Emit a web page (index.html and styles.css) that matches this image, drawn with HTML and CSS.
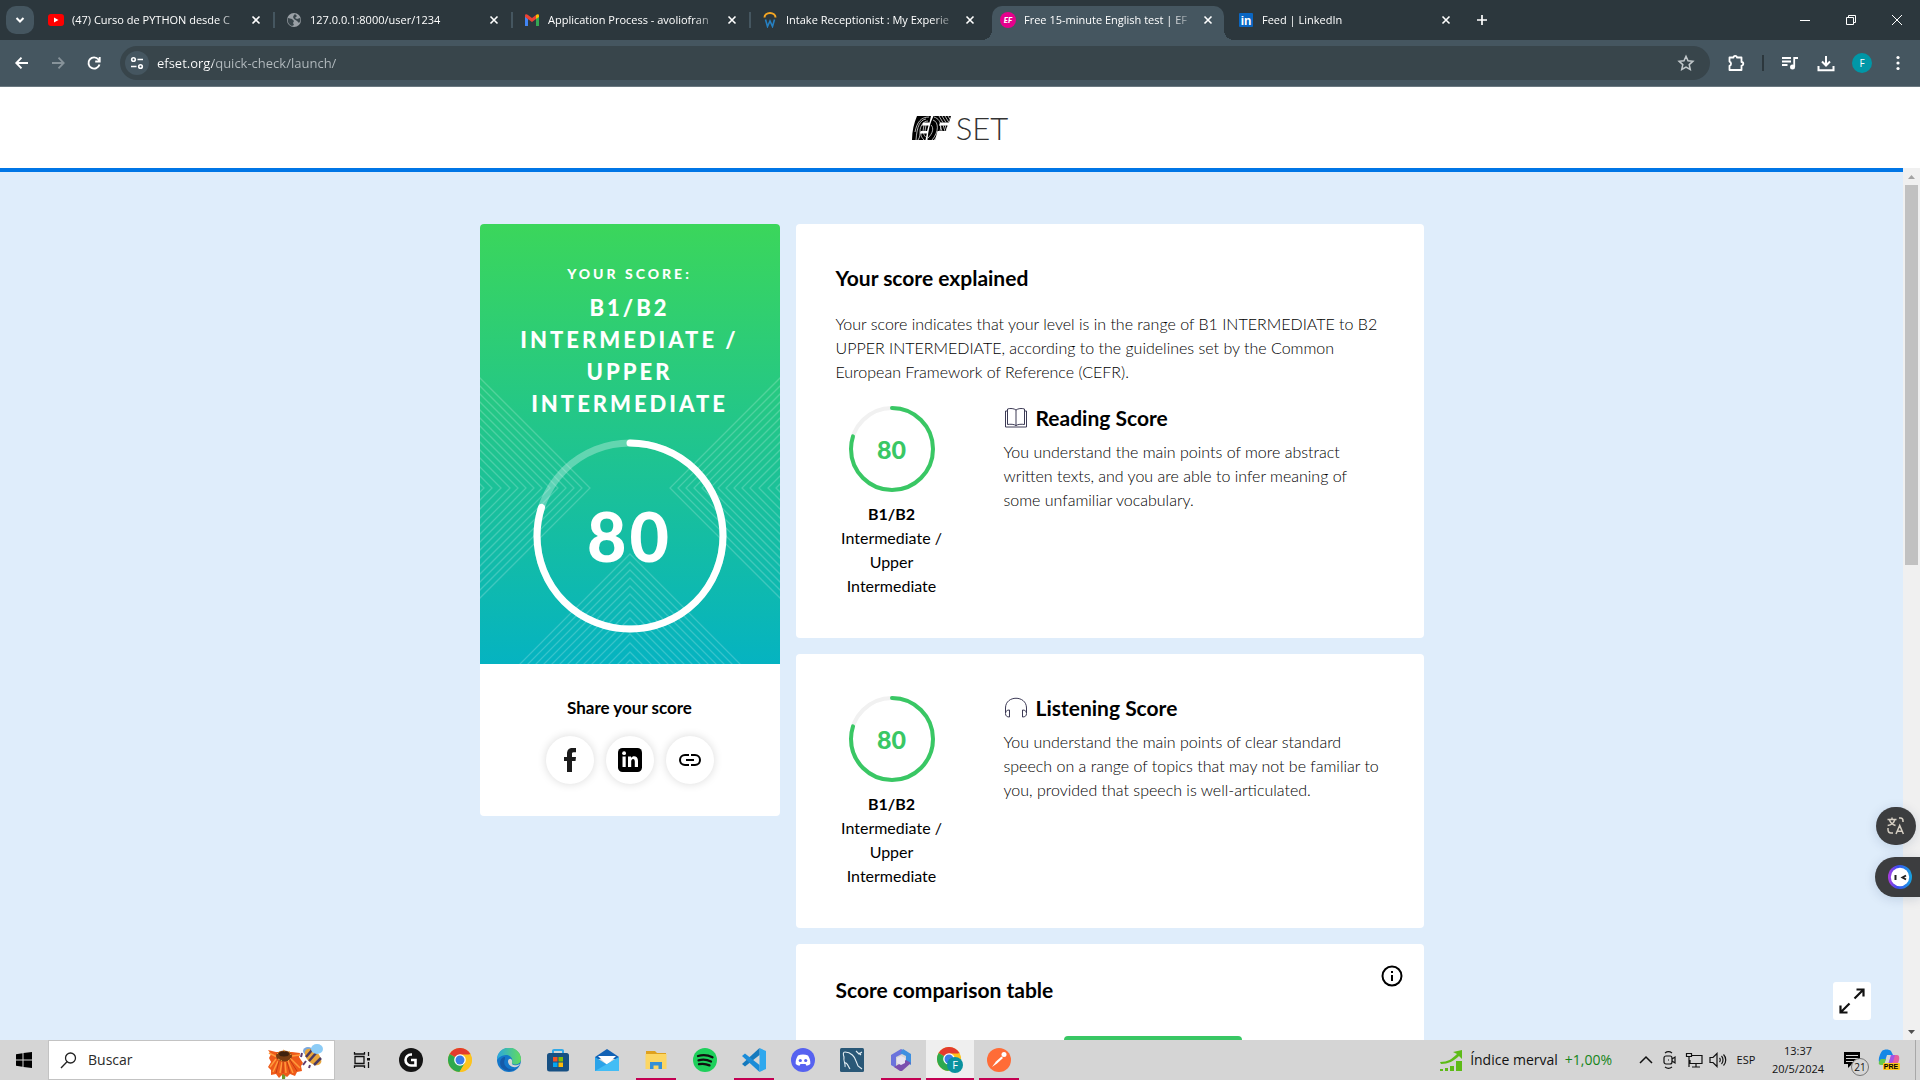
FILE: index.html
```html
<!DOCTYPE html>
<html lang="en">
<head>
<meta charset="utf-8">
<title>Free 15-minute English test | EF SET</title>
<link rel="stylesheet" href="styles.css">
</head>
<body>
<svg class="defs" aria-hidden="true">
  <defs>
    <symbol id="x" viewBox="0 0 16 16"><path d="M4.500 4.500l7 7M11.500 4.500l-7 7" stroke="currentColor" stroke-width="1.600" fill="none"/></symbol>
    <symbol id="chrome" viewBox="0 0 24 24">
      <circle cx="12" cy="12" r="12" fill="#fcc31e"/>
      <path d="M12 12L1.600 6A12 12 0 0 1 22.400 6z" fill="#e33b2e"/><path d="M6 6h16.400H12z" fill="#e33b2e"/>
      <path d="M12 12L1.600 6A12 12 0 0 0 11.500 24l5.700-9z" fill="#2da94f"/>
      <path d="M12 6.500h10.400A12 12 0 0 1 11.500 24l5.300-9z" fill="#fcc31e"/>
      <circle cx="12" cy="12" r="5.800" fill="#fff"/><circle cx="12" cy="12" r="4.500" fill="#3a7de8"/>
    </symbol>
    <symbol id="diamonds" viewBox="-111 -111 222 222">
      <path fill="none" stroke="#fff" stroke-opacity=".2" stroke-width="1.300" d="M0-110L110 0 0 110-110 0zM0-102L102 0 0 102-102 0zM0-94L94 0 0 94-94 0zM0-86L86 0 0 86-86 0zM0-78L78 0 0 78-78 0zM0-70L70 0 0 70-70 0zM0-62L62 0 0 62-62 0zM0-54L54 0 0 54-54 0zM0-46L46 0 0 46-46 0zM0-38L38 0 0 38-38 0zM0-30L30 0 0 30-30 0zM0-21L21 0 0 21-21 0zM0-12L12 0 0 12-12 0zM0-4L4 0 0 4-4 0z"/>
    </symbol>
  </defs>
</svg>

<header class="tabstrip">
  <div class="tab-search"><button aria-label="Search tabs"><svg width="16" height="16" viewBox="0 0 16 16"><path d="M4.500 6l3.500 3.500L11.500 6" stroke="currentColor" stroke-width="2" fill="none"/></svg></button></div>
  <nav class="tabs">
    <div class="tab">
      <svg width="16" height="16" viewBox="0 0 16 16"><rect y="2" width="16" height="12" rx="3" fill="#f00"/><path d="M6 5.500v5l4.500-2.500z" fill="#fff"/></svg>
      <a href="#">(47) Curso de PYTHON desde C</a><button aria-label="Close tab"><svg width="16" height="16"><use href="#x"/></svg></button>
    </div>
    <div class="tab">
      <svg width="16" height="16" viewBox="0 0 16 16"><circle cx="8" cy="8" r="7" fill="#9aa0a6"/><path d="M2 6l4 1 2 2-1 2 1 2-2 1C3 13 1 10 2 6zM9 2l2 2-2 2 2 1 3-1c1 2 0 4-1 5l-2-2-3-2-1-2 1-2z" fill="#39454b"/></svg>
      <a href="#">127.0.0.1:8000/user/1234</a><button aria-label="Close tab"><svg width="16" height="16"><use href="#x"/></svg></button>
    </div>
    <div class="tab">
      <svg width="16" height="16" viewBox="0 0 16 16"><path d="M1 4v10h3V7z" fill="#4285f4"/><path d="M15 4v10h-3V7z" fill="#34a853"/><path d="M1 3.500C1 2 3 2 4 3l4 3 4-3v4L8 10 1 5z" fill="#ea4335"/><path d="M12 3c1-1 3-1 3 .5V5l-3 2z" fill="#fbbc04"/></svg>
      <a href="#">Application Process - avoliofran</a><button aria-label="Close tab"><svg width="16" height="16"><use href="#x"/></svg></button>
    </div>
    <div class="tab">
      <svg width="16" height="16" viewBox="0 0 16 16"><path d="M2.500 5.500a5.500 4.500 0 0 1 11 0" fill="none" stroke="#f5a623" stroke-width="2"/><path d="M3.500 7.500l2 7L8 9l2.500 5.500 2-7" fill="none" stroke="#2680c2" stroke-width="1.600"/></svg>
      <a href="#">Intake Receptionist : My Experie</a><button aria-label="Close tab"><svg width="16" height="16"><use href="#x"/></svg></button>
    </div>
    <div class="tab active">
      <svg width="16" height="16" viewBox="0 0 16 16"><circle cx="8" cy="8" r="8" fill="#e6008c"/><text x="8" y="11" text-anchor="middle" class="ef-mini">EF</text></svg>
      <a href="#">Free 15-minute English test | EF</a><button aria-label="Close tab"><svg width="16" height="16"><use href="#x"/></svg></button>
    </div>
    <div class="tab">
      <svg width="16" height="16" viewBox="0 0 16 16"><rect x="1" y="1" width="14" height="14" rx="1" fill="#0a66c2"/><text x="8" y="12.500" text-anchor="middle" class="in-mini">in</text></svg>
      <a href="#">Feed | LinkedIn</a><button aria-label="Close tab"><svg width="16" height="16"><use href="#x"/></svg></button>
    </div>
  </nav>
  <button class="new-tab" aria-label="New tab"><svg width="16" height="16" viewBox="0 0 16 16"><path d="M8 3v10M3 8h10" stroke="currentColor" stroke-width="1.700"/></svg></button>
  <div class="window-buttons">
    <button aria-label="Minimize"><svg width="12" height="12"><path d="M1 6.500h10" stroke="#fff"/></svg></button>
    <button aria-label="Restore"><svg width="12" height="12"><path d="M1.500 3.500h7v7h-7zM3.500 3.500v-2h7v7h-2" stroke="#fff" fill="none"/></svg></button>
    <button aria-label="Close"><svg width="12" height="12"><path d="M1 1l10 10M11 1L1 11" stroke="#fff"/></svg></button>
  </div>
</header>

<div class="toolbar">
  <button aria-label="Back"><svg width="20" height="20" viewBox="0 0 20 20"><path d="M16 10H5M9.500 4.700L4.300 10l5.200 5.300" stroke="currentColor" stroke-width="1.900" fill="none"/></svg></button>
  <button class="dim" aria-label="Forward"><svg width="20" height="20" viewBox="0 0 20 20"><path d="M4 10h11M10.500 4.700l5.200 5.300-5.200 5.300" stroke="currentColor" stroke-width="1.800" fill="none"/></svg></button>
  <button aria-label="Reload"><svg width="20" height="20" viewBox="0 0 20 20"><path d="M15.500 11.500A5.600 5.600 0 1 1 14.500 6.500L15.500 8M15.700 4v4.500h-4.500" stroke="currentColor" stroke-width="1.900" fill="none"/></svg></button>
  <form class="omnibox">
    <button type="button" class="site-info" aria-label="Site information"><svg width="16" height="16" viewBox="0 0 16 16" stroke="#fff" stroke-width="1.600" fill="none"><circle cx="4.500" cy="4.500" r="1.800"/><path d="M8.500 4.500H14M2 11.500h5.500"/><circle cx="11.500" cy="11.500" r="1.800"/></svg></button>
    <input type="text" aria-label="Address" value="efset.org/quick-check/launch/">
    <button type="button" class="star" aria-label="Bookmark"><svg width="18" height="18" viewBox="0 0 18 18"><path d="M9 2.300l2 4.500 4.900.5-3.700 3.300 1.100 4.900L9 13l-4.300 2.500 1.100-4.900-3.700-3.300 4.900-.5z" stroke="#c3c9cc" stroke-width="1.500" fill="none"/></svg></button>
  </form>
  <button aria-label="Extensions"><svg width="20" height="20" viewBox="0 0 20 20"><path d="M3.500 4.500h4a1.700 1.700 0 0 1 3.400 0h4.600V9a1.800 1.800 0 0 1 0 3.600v4.400h-12v-4.200a2.200 2.200 0 0 0 0-4.200z" stroke="currentColor" stroke-width="1.800" fill="none" stroke-linejoin="round"/></svg></button>
  <span class="divider"></span>
  <button aria-label="Media"><svg width="20" height="20" viewBox="0 0 20 20"><path d="M2 5h9M2 8.500h9M2 12h5.500M14.200 14V5H18" stroke="currentColor" stroke-width="1.800" fill="none"/><circle cx="12.500" cy="14" r="2.500" fill="currentColor"/></svg></button>
  <button aria-label="Downloads"><svg width="20" height="20" viewBox="0 0 20 20"><path d="M10 3v9.500M6 8.500l4 4 4-4M2.500 13v4.200h15V13" stroke="currentColor" stroke-width="2" fill="none"/></svg></button>
  <button aria-label="Profile"><span class="avatar">F</span></button>
  <button aria-label="Menu"><svg width="20" height="20" viewBox="0 0 20 20" fill="currentColor"><circle cx="10" cy="4.500" r="1.600"/><circle cx="10" cy="10" r="1.600"/><circle cx="10" cy="15.500" r="1.600"/></svg></button>
</div>

<div class="site-header">
  <a href="#" class="logo" aria-label="EF SET">
    <svg width="40" height="24" viewBox="0 0 40 24">
      <path d="M5 0h14l-1.500 6.500H11L10 9.500h6.500L15 15H8.700L7.800 17.500h7L13.500 24H0C0 15 2 7 5 0z"/>
      <path d="M21.500 0H39l-2 6.500h-9l-1 3h8.500L34 15h-8.500L23 24h-7.500C16 15 18 7 21.500 0z"/>
      <g fill="none" stroke="#fff" stroke-width=".7">
        <path d="M14 3C8 4 5 10 4 24M17 1C9 1 5 6 3 16M16 5c-5 0-8 6-8 10s0 6-2 9M10 16c-2 2-1 5 2 8M12 16c-1 1 0 4 3 6M12 9l-1 6M14 9l-1 6"/>
        <path d="M21 4c6 2 6 12-1 20M22 1c9 3 9 14 0 23M19 9c3 3 2 8-3 13M27 0l4 6.500M30 0l4 6.500M33 0l4 6.500M36 0l3 5M28 9l2 6M31 9l2 6M33 9l2 6"/>
      </g>
    </svg>
    <span>SET</span>
  </a>
</div>

<div class="viewport">
  <main class="page">
    <div class="columns">
      <aside class="card score-card">
        <section class="score-hero">
          <svg class="pat left" width="222" height="222"><use href="#diamonds"/></svg>
          <svg class="pat right" width="222" height="222"><use href="#diamonds"/></svg>
          <svg class="pat bottom" width="222" height="222"><use href="#diamonds"/></svg>
          <p class="eyebrow">YOUR SCORE:</p>
          <h1>B1/B2<br>INTERMEDIATE /<br>UPPER<br>INTERMEDIATE</h1>
          <div class="big-ring">
            <svg width="200" height="200" viewBox="-100 -100 200 200" fill="none" stroke="#fff" stroke-width="7" stroke-linecap="round"><circle r="93" stroke-opacity=".3"/><circle r="93" pathLength="100" stroke-dasharray="80 100" transform="rotate(-90)"/></svg>
            <strong>80</strong>
          </div>
        </section>
        <section class="share">
          <h2>Share your score</h2>
          <div class="share-row">
            <button aria-label="Facebook"><svg width="24" height="24" viewBox="0 0 24 24"><path d="M9 24V13H6V9h3V6c0-4 2-6 5-6h4v4.300h-2.500C14.200 4.300 14 5 14 6v3h4l-.5 4H14v11z" fill="#1b1b1b"/></svg></button>
            <button aria-label="LinkedIn"><svg width="24" height="24" viewBox="0 0 24 24"><rect width="24" height="24" rx="4.500"/><path d="M4.500 8.500h3.200V19H4.500zM10 8.500h3V10c1.800-2.800 7-2.400 7 2.800V19h-3.200v-5.500c0-3.400-3.600-3.200-3.600 0V19H10z" fill="#fff"/><circle cx="6.100" cy="5.200" r="1.900" fill="#fff"/></svg></button>
            <button aria-label="Copy link"><svg width="24" height="24" viewBox="0 0 24 24" fill="none" stroke="#000" stroke-width="2"><path d="M11 7H7a5 5 0 0 0 0 10h4M13 7h4a5 5 0 0 1 0 10h-4M8 12h8"/></svg></button>
          </div>
        </section>
      </aside>

      <div class="details">
        <section class="card detail">
          <h2>Your score explained</h2>
          <p class="intro">Your score indicates that your level is in the range of B1 INTERMEDIATE to B2 UPPER INTERMEDIATE, according to the guidelines set by the Common European Framework of Reference (CEFR).</p>
          <div class="skill">
            <div class="level">
              <div class="ring"><svg width="90" height="90" viewBox="-45 -45 90 90" fill="none" stroke-width="4" stroke-linecap="round"><circle r="41" stroke="#f1f1f1"/><circle r="41" stroke="#39c764" pathLength="100" stroke-dasharray="80 100" transform="rotate(-90)"/></svg><span>80</span></div>
              <p><b>B1/B2</b><br>Intermediate / Upper Intermediate</p>
            </div>
            <div class="about">
              <h3><svg width="24" height="24" viewBox="0 0 24 24" fill="none" stroke="#3c3a55"><path d="M3.500 3c3-1 6.500-.5 8.500 1 2-1.500 5.500-2 8.500-1v15.500c-3-.5-6.500-.3-8.500 1-2-1.300-5.500-1.500-8.500-1zM12 4v16M3 5H1.500v16h21V5H21"/></svg>Reading Score</h3>
              <p>You understand the main points of more abstract written texts, and you are able to infer meaning of some unfamiliar vocabulary.</p>
            </div>
          </div>
        </section>
        <section class="card detail">
          <div class="skill">
            <div class="level">
              <div class="ring"><svg width="90" height="90" viewBox="-45 -45 90 90" fill="none" stroke-width="4" stroke-linecap="round"><circle r="41" stroke="#f1f1f1"/><circle r="41" stroke="#39c764" pathLength="100" stroke-dasharray="80 100" transform="rotate(-90)"/></svg><span>80</span></div>
              <p><b>B1/B2</b><br>Intermediate / Upper Intermediate</p>
            </div>
            <div class="about">
              <h3><svg width="24" height="24" viewBox="0 0 24 24" fill="none" stroke="#3c3a55"><path d="M1.500 17v-5C1.500-1 22.500-1 22.500 12v5M5.500 14v7c-2.500 0-4-1-4-3.500S3 14 5.500 14zM18.500 14v7c2.500 0 4-1 4-3.500S21 14 18.500 14z"/></svg>Listening Score</h3>
              <p>You understand the main points of clear standard speech on a range of topics that may not be familiar to you, provided that speech is well-articulated.</p>
            </div>
          </div>
        </section>
        <section class="card comparison">
          <h2>Score comparison table</h2>
          <button class="info" aria-label="About this table"><svg width="24" height="24" viewBox="0 0 24 24" fill="none" stroke="#000" stroke-width="2"><circle cx="12" cy="12" r="9.500"/><path d="M12 11v6M12 7v2"/></svg></button>
          <div class="table-head"><span></span><span class="current"></span><span></span></div>
        </section>
      </div>
    </div>
  </main>
  <div class="scrollbar">
    <svg width="17" height="17" viewBox="0 0 17 17"><path d="M5 11l3.500-4 3.500 4z" fill="#a3a3a3"/></svg>
    <div class="thumb"></div>
    <svg width="17" height="17" viewBox="0 0 17 17"><path d="M5 7h7l-3.500 4z" fill="#505050"/></svg>
  </div>
  <button class="float translate" aria-label="Translate"><svg width="20" height="20" viewBox="0 0 20 20" fill="none" stroke="#d6cfc4" stroke-width="1.500"><path d="M1.500 3.500h9M6 1.500v2M3.500 4c1 3 3 4.500 6 5.500M8.700 4c-1 3-3.500 5-7 5.500M10 18l3.700-8.500L17.400 18M11.300 15.200h5M13 2h1.500c1.500 0 2.500 1 2.500 3v1M2 12v1.500C2 16 3 17 5 17h2"/></svg></button>
  <button class="float assistant" aria-label="Assistant"><svg width="24" height="24" viewBox="0 0 24 24"><defs><linearGradient id="as" x1="0" y1=".7" x2="1" y2=".7"><stop stop-color="#b03be0"/><stop offset=".4" stop-color="#3a4cf0"/><stop offset="1" stop-color="#16a5e0"/></linearGradient></defs><circle cx="12" cy="12" r="12" fill="url(#as)"/><circle cx="12" cy="12" r="9.200" fill="#fff"/><path d="M7.500 10v5M18 10.500l-3.500 2 3.500 2" stroke="#222" stroke-width="2" fill="none"/></svg></button>
  <button class="float expand" aria-label="Expand"><svg width="26" height="26" viewBox="0 0 26 26" fill="none" stroke="#111" stroke-width="2.200"><path d="M15.500 10.500l9-9M17.500 1.500h7v7M10.500 15.500l-9 9M1.500 17.500v7h7"/></svg></button>
</div>

<footer class="taskbar">
  <button class="start" aria-label="Start"><svg width="16" height="16" viewBox="0 0 16 16"><path d="M0 2.200L6.500 1.300v6.200H0zM7.500 1.100L16 0v7.500H7.500zM0 8.500h6.500v6.200L0 13.800zM7.500 8.500H16V16l-8.500-1.100z"/></svg></button>
  <label class="search">
    <svg width="17" height="17" viewBox="0 0 17 17" fill="none" stroke="#222" stroke-width="1.300"><circle cx="10.500" cy="6" r="5"/><path d="M7 9.700L1 16"/></svg>
    <input type="text" placeholder="Buscar" aria-label="Buscar">
    <svg width="60" height="38" viewBox="0 0 60 38">
      <path d="M16 32h4l-1 6h-3z" fill="#6b9a2c"/>
      <path d="M2 9l8 2h16l8 1-1 4 4 6-2 3 1 5-5 1-2 4-5-2-3 3-4-3-4 4-3-4-5 1 0-5-3-3 3-5-2-4 2-4z" fill="#ee5a1a"/>
      <path d="M11 16l-8-4M10 18L4 26M12 20L7 31M16 21l-2 11M19 21l1 11M22 20l5 12M25 18l9 9M26 15l8-1" stroke="#ff9a3a" stroke-width="1.500"/>
      <path d="M13 20l-3 12M17 21v11M21 21l3 11M24 19l7 11" stroke="#b93410" stroke-width=".8"/>
      <ellipse cx="18" cy="15" rx="8" ry="5.500" fill="#7a3d12"/><ellipse cx="18" cy="13" rx="5" ry="2.500" fill="#3e210e"/><path d="M11 13l3-3M17 9l2 1M23 10l2 4M12 18l4 2M22 20l3-3" stroke="#f2a03a" stroke-dasharray="2 1"/>
      <ellipse cx="42" cy="10" rx="5" ry="4" fill="#7aa7dd"/>
      <ellipse cx="47" cy="16" rx="10" ry="6" transform="rotate(43 47 16)" fill="#e8a63c"/>
      <path d="M40 16l6-7M43 20l8-9M48 24l7-7" stroke="#4b3a62" stroke-width="2.500"/>
      <ellipse cx="51" cy="8" rx="6" ry="5" fill="#8cccf6"/>
      <path d="M36 12l-1 4M40 20l-3 4M44 24l-1 3" stroke="#5c3c70" stroke-width="2"/>
    </svg>
  </label>
  <div class="apps">
    <button aria-label="Task view"><svg width="18" height="18" viewBox="0 0 18 18" fill="none" stroke="#111" stroke-width="1.300"><path d="M2 5.500h9v7H2zM1.500 1v2h10V1M1.500 17v-2h10v2M15.500 1v4M15.500 11v6"/><path d="M14 7h3v2.500h-3z" fill="#111" stroke="none"/></svg></button>
    <button aria-label="Logitech G HUB"><svg width="24" height="24" viewBox="0 0 24 24"><circle cx="12" cy="12" r="12" fill="#151515"/><path d="M13 6.500h-1a5.500 5.500 0 1 0 0 11h4.500V12H12" fill="none" stroke="#fff" stroke-width="2.600"/></svg></button>
    <button aria-label="Chrome"><svg width="24" height="24"><use href="#chrome"/></svg></button>
    <button aria-label="Edge"><svg width="24" height="24" viewBox="0 0 24 24"><defs><linearGradient id="ed" x1="0" x2="1"><stop stop-color="#2aa6e0"/><stop offset="1" stop-color="#62dc5d"/></linearGradient></defs><circle cx="12" cy="12" r="12" fill="#1477ca"/><path d="M0 12A12 12 0 0 1 24 11c0 6-8 7-9.500 3.500C17 11 13 7 9 7S1 10 0 12z" fill="url(#ed)"/><path d="M8 11c-3 6 3 12 11 10a12 12 0 0 1-14-1C1 15 4 9 8 9z" fill="#155aa8"/><path d="M11 13c1-4 5-2 4 1-1 4 4 4 8 2-2 5-12 4-12-3z" fill="#d5d5d5"/></svg></button>
    <button aria-label="Microsoft Store"><svg width="24" height="24" viewBox="0 0 24 24"><path d="M7 6V2.500C7 2 7.500 2 8 2h8c.5 0 1 0 1 .5V6" fill="none" stroke="#32a9e8" stroke-width="2"/><rect x="1" y="5" width="22" height="18.500" rx="2.500" fill="#175083"/><path d="M7 9h4.500v4.500H7z" fill="#f35325"/><path d="M12.500 9H17v4.500h-4.500z" fill="#81bc06"/><path d="M7 14.500h4.500V19H7z" fill="#05a6f0"/><path d="M12.500 14.500H17V19h-4.500z" fill="#ffba08"/></svg></button>
    <button aria-label="Mail"><svg width="24" height="24" viewBox="0 0 24 24"><path d="M0 9l12-8 12 8v2H0z" fill="#1262b5"/><path d="M3 8h18l-9 9z" fill="#fff"/><path d="M0 9l12 7.500L24 9v14H0z" fill="#2ba3e8"/><path d="M24 9v14H0z" fill="#43bdf5"/></svg></button>
    <button class="running" aria-label="File Explorer"><svg width="24" height="24" viewBox="0 0 24 24"><path d="M2 3h9l2 2h9v7H2z" fill="#dfa11e"/><rect x="1.500" y="6" width="21" height="15" fill="#fcd663"/><path d="M6 21v-7h12v7h-3.500v-3.500h-5V21z" fill="#348fd8"/></svg></button>
    <button aria-label="Spotify"><svg width="24" height="24" viewBox="0 0 24 24"><circle cx="12" cy="12" r="12" fill="#1ed05b"/><path d="M5 8c5-1.500 10-1 14.500 1.300M5.500 12.300c4.500-1.200 8.500-.8 12.500 1.200M6 16.200c4-.9 7-.5 10.500 1.200" fill="none" stroke="#111" stroke-width="2.300" stroke-linecap="round"/></svg></button>
    <button class="running" aria-label="Visual Studio Code"><svg width="24" height="24" viewBox="0 0 24 24"><path d="M17.500 0L24 3v18l-6.500 3z" fill="#2fa8ee"/><path d="M17.500 0v7L3 18.500 0 16z" fill="#1579bd"/><path d="M17.500 24v-7L3 5.500 0 8z" fill="#1b8cd8"/></svg></button>
    <button aria-label="Discord"><svg width="24" height="24" viewBox="0 0 24 24"><circle cx="12" cy="12" r="12" fill="#5662f0"/><path d="M7 7.500c3-1.300 7-1.300 10 0 2 3 2.500 5.500 2.300 8.500-1.500 1-2.500 1.500-3.800 1.700l-1-1.700h-5l-1 1.700C7.200 17.500 6.200 17 4.700 16 4.500 13 5 10.500 7 7.500z" fill="#fff"/><circle cx="9.300" cy="12.500" r="1.600" fill="#5662f0"/><circle cx="14.700" cy="12.500" r="1.600" fill="#5662f0"/></svg></button>
    <button aria-label="MySQL Workbench"><svg width="24" height="24" viewBox="0 0 24 24"><rect width="24" height="24" rx="1.500" fill="#2a5877"/><path d="M5 19c1-3-2-6-1-10C3 6 3 4 5 4c6 0 10 5 11 9l2 5 4 3M5 15c2-1 3 3 5 6M16 3l3 3 3-2M19 5l2 2" fill="none" stroke="#e3edf3" stroke-width="1.100"/></svg></button>
    <button class="running" aria-label="Microsoft 365"><svg width="24" height="24" viewBox="0 0 24 24"><path d="M12 1L2 7v10l5 3V9l8-4 3-1z" fill="#6b73dc"/><path d="M14 1l8 5v11l-5-3V8l-6-3z" fill="#3d8fe0"/><path d="M22 15l-9 8h-2l-6-4 7-4 5-3z" fill="#7b4fae"/><path d="M12 8l4 2v5l-4 2-4-2v-5z" fill="#e6e3f0"/></svg></button>
    <button class="running current" aria-label="Chrome, profile F"><svg width="26" height="26" viewBox="0 0 26 26"><use href="#chrome" width="24" height="24"/><circle cx="18" cy="18" r="8" fill="#0a929f"/><text x="18" y="22" text-anchor="middle" class="badge-f">F</text></svg></button>
    <button class="running" aria-label="Postman"><svg width="24" height="24" viewBox="0 0 24 24"><circle cx="12" cy="12" r="12" fill="#ff6c37"/><circle cx="17" cy="6.500" r="2.500" fill="#fff"/><path d="M14.500 8.500l1.500 1.500-6 5.500-5 3.500 4-5.500z" fill="#fff"/></svg></button>
  </div>
  <div class="tray">
    <button class="news"><svg width="23" height="23" viewBox="0 0 23 23" fill="#5dbb17"><path d="M0 13c8 0 12-3 17-8l-4-2 9-2v9l-3-3C14 12 8 15 1 15zM0 20h3v2H0zM5 19h3v3H5zM10 17h4v5h-4zM16 12h6v10h-6z"/></svg><span>Índice merval</span><span class="up">+1,00%</span></button>
    <button aria-label="Show hidden icons"><svg width="14" height="14" viewBox="0 0 14 14"><path d="M1 10l6-6 6 6" fill="none" stroke="#111" stroke-width="1.500"/></svg></button>
    <button aria-label="Camera"><svg width="16" height="18" viewBox="0 0 16 18" fill="none" stroke="#111" stroke-width="1.200"><rect x="2" y="5" width="8" height="8" rx="2"/><path d="M10 8l3-2v6l-3-2M3 2c2-1.500 5-1.500 7 0M3 16c2 1.500 5 1.500 7 0M6 9h1"/></svg></button>
    <button aria-label="Network"><svg width="18" height="16" viewBox="0 0 18 16" fill="none" stroke="#111" stroke-width="1.200"><path d="M6 3.500h11v8H5V8M11 12v3M7 15h8M1.500 1.500h5v3h-5zM4 5v10"/></svg></button>
    <button aria-label="Volume"><svg width="18" height="16" viewBox="0 0 18 16" fill="none" stroke="#111" stroke-width="1.200"><path d="M1 5.500h3l4-4v13l-4-4H1zM10.500 6c1 1 1 3 0 4M12.500 4c2 2 2 6 0 8M14.500 2.500c3 3 3 8 0 11"/></svg></button>
    <button class="lang">ESP</button>
    <button class="clock">13:37<br>20/5/2024</button>
    <button class="notice" aria-label="21 notifications"><svg width="18" height="18" viewBox="0 0 18 18"><path d="M1 1h16v12H9l-4 4v-4H1z"/><path d="M3 4.500h12M3 7.500h12M3 10.500h9" stroke="#d5d5d5"/></svg><span>21</span></button>
    <button class="copilot" aria-label="Copilot preview"><svg width="22" height="22" viewBox="0 0 22 22"><path d="M4 2c2-2 7-2 9 0l2 4H9L6 15H3C-1 14 1 6 4 2z" fill="#1688e6"/><path d="M3 10h5l-2 6H3c-3 0-3-3 0-6z" fill="#65c84c"/><path d="M14 6h5c3 0 3 5 0 10H9c2 0 3-8 5-10z" fill="#e7609f"/><path d="M13 6h4l-2 7-5 3z" fill="#a256e5"/><rect x="5" y="14" width="17" height="7" rx="1" fill="#ffc61a"/><text x="13" y="20" text-anchor="middle" class="pre">PRE</text></svg></button>
    <span class="show-desktop"></span>
  </div>
</footer>
</body>
</html>
```
FILE: styles.css
```css
* { box-sizing: border-box; }
body {
  margin: 0;
  height: 100vh;
  display: flex;
  flex-direction: column;
  overflow: hidden;
  font-family: Lato, "Liberation Sans", sans-serif;
  color: #000;
}
h1, h2, h3, p { margin: 0; }
button { border: 0; padding: 0; background: none; color: inherit; font: inherit; display: flex; align-items: center; justify-content: center; }
a { color: inherit; text-decoration: none; }
svg { display: block; flex: none; }
.defs { position: absolute; width: 0; height: 0; }

/* browser tabs */
.tabstrip { display: flex; height: 40px; flex: none; background: #2c373d; color: #fff; font: 11px/16px "Open Sans", sans-serif; }
.tab-search { width: 37px; padding: 6px 3px 6px 6px; flex: none; }
.tab-search button { width: 28px; height: 28px; border-radius: 10px; background: #455660; }
.tabs { display: flex; flex: 0 1 1428px; min-width: 0; }
.tab { position: relative; display: flex; flex: 1 1 0; min-width: 0; align-items: center; gap: 8px; padding: 0 11px; }
.tab a { flex: 1; min-width: 0; margin-right: -4px; overflow: hidden; white-space: nowrap; -webkit-mask-image: linear-gradient(90deg, #000 calc(100% - 26px), transparent); mask-image: linear-gradient(90deg, #000 calc(100% - 26px), transparent); }
.tab:not(.active):nth-child(-n+3)::after { content: ""; position: absolute; right: 0; top: 12px; width: 2px; height: 16px; background: #455660; }
.tab.active { isolation: isolate; }
.tab.active::before { content: ""; position: absolute; inset: 6px 3px 0; border-radius: 10px 10px 0 0; background: #455660; z-index: -1; }
.tab.active::after { content: ""; position: absolute; inset: auto -7px 0; height: 10px; z-index: -1;
  background: radial-gradient(circle at 0 0, transparent 10px, #455660 10px) left / 10px 10px no-repeat, radial-gradient(circle at 100% 0, transparent 10px, #455660 10px) right / 10px 10px no-repeat; }
.new-tab { width: 34px; }
.window-buttons { display: flex; margin-left: auto; }
.window-buttons button { width: 46px; }
.ef-mini { font: italic 900 8px Lato, sans-serif; fill: #fff; }
.in-mini { font: bold 12px "Liberation Sans", sans-serif; fill: #fff; }

/* browser toolbar */
.toolbar { display: flex; align-items: center; flex: none; height: 47px; padding: 0 4px; color: #fff; background: #455660; border-bottom: 1px solid #6a7880; }
.toolbar > button { width: 36px; height: 36px; }
.toolbar .dim { color: #87939a; }
.omnibox { display: flex; align-items: center; flex: 1; min-width: 0; height: 34px; margin: 0 8px; padding: 0 15px 0 5px; border-radius: 17px; background: #38454b; }
.site-info { width: 24px; height: 24px; border-radius: 50%; background: #455660; }
.omnibox input { flex: 1; min-width: 0; margin-left: 8px; padding: 0; border: 0; outline: 0; font: 13px/20px "Open Sans", sans-serif; color: transparent; background: linear-gradient(90deg, #fff 56px, #b4bcc0 56px); -webkit-background-clip: text; background-clip: text; }
.divider { width: 2px; height: 16px; margin: 0 8px; background: #2c373d; }
.avatar { width: 20px; height: 20px; border-radius: 50%; background: #0097a7; font: 10px/20px "Open Sans", sans-serif; text-align: center; }

/* site header */
.site-header { display: flex; align-items: center; justify-content: center; flex: none; height: 81px; background: #fff; }
.logo { display: flex; align-items: center; gap: 4px; }
.logo span { font: 200 32px/32px Inter, Lato, sans-serif; font-family: Lato, sans-serif; font-weight: 300; font-size: 31px; color: #333; }

/* page */
.viewport { position: relative; display: flex; flex: 1; min-height: 0; overflow: hidden; }
.page { flex: 1; min-width: 0; border-top: 4px solid #0076e6; background: #dfedfb; overflow: hidden; }
.columns { display: grid; grid-template-columns: 300px minmax(0, 1fr); align-items: start; gap: 16px; max-width: 944px; margin: 52px auto 0; }
.card { background: #fff; border-radius: 4px; overflow: hidden; }
.details { display: grid; gap: 16px; }

.score-hero { position: relative; padding: 40px 0 28px; overflow: hidden; color: #fff; text-align: center; background: linear-gradient(#3bd65b, #05b3c1); }
.pat { position: absolute; }
.pat.left { left: -111px; top: 153px; }
.pat.right { right: -111px; top: 153px; }
.pat.bottom { left: calc(50% - 111px); bottom: -111px; }
.eyebrow { position: relative; font-weight: 900; font-size: 14px; line-height: 20px; letter-spacing: 3px; }
.score-hero h1 { position: relative; margin: 8px 0 16px; font-weight: 900; font-size: 22px; line-height: 32px; letter-spacing: 3px; }
.big-ring { position: relative; display: grid; place-items: center; }
.big-ring > * { grid-area: 1 / 1; }
.big-ring strong { font-weight: 900; font-size: 68px; line-height: 80px; letter-spacing: 3px; }

.share { padding: 32px 0; text-align: center; }
.share h2 { font-size: 17px; line-height: 24px; }
.share-row { display: flex; justify-content: center; gap: 12px; margin-top: 16px; }
.share-row button { width: 48px; height: 48px; border-radius: 50%; background: #fff; box-shadow: 0 0 10px rgba(0, 0, 0, .15); }

.detail { padding: 40px; }
.detail h2, .detail h3, .comparison h2 { font-size: 21px; line-height: 28px; }
.detail p { font-size: 16px; line-height: 24px; }
.intro { margin: 20px 0; }
.skill { display: grid; grid-template-columns: 112px minmax(0, 1fr); gap: 56px; }
.level { text-align: center; }
.ring { display: grid; place-items: center; margin-bottom: 8px; }
.ring > * { grid-area: 1 / 1; }
.ring span { font-weight: 900; font-size: 25px; line-height: 32px; color: #39c764; }
.about h3 { display: flex; align-items: center; gap: 8px; margin-bottom: 8px; }
.intro, .about p { font-weight: 300; }
.comparison { position: relative; padding: 32px 40px; }
.info { position: absolute; top: 20px; right: 20px; }
.table-head { display: grid; grid-template-columns: 228px 178px 1fr; margin-top: 32px; }
.table-head span { height: 48px; }
.table-head .current { border-radius: 4px 4px 0 0; background: #39c764; }

.scrollbar { display: flex; flex-direction: column; width: 17px; background: #f0f0f0; }
.thumb { height: 380px; margin: 0 2px auto; background: #c1c1c1; }

.float { position: absolute; }
.translate { right: 4px; bottom: 195px; width: 40px; height: 38px; border-radius: 20px; background: #3c3d3f; box-shadow: 0 2px 12px rgba(0, 40, 90, .15); }
.assistant { right: 0; bottom: 143px; width: 45px; height: 40px; padding-left: 5px; border-radius: 20px 0 0 20px; background: #3c3d3f; box-shadow: 0 2px 12px rgba(0, 40, 90, .15); }
.expand { right: 49px; bottom: 20px; width: 38px; height: 38px; border-radius: 3px; background: #fff; }

/* taskbar */
.taskbar { display: flex; flex: none; height: 40px; background: #d5d5d5; font: 14px/20px "Open Sans", sans-serif; }
.start { width: 48px; }
.search { display: flex; align-items: center; width: 287px; padding: 0 8px 0 11px; border: 1px solid #c3c3c3; background: #fff; }
.search input { flex: 1; min-width: 0; margin-left: 11px; padding: 0; border: 0; outline: 0; background: none; font: inherit; }
.search input::placeholder { color: #2a2a2a; }
.apps { display: flex; gap: 1px; margin-left: 3px; }
.apps button { width: 48px; }
.running { background: linear-gradient(#c30052, #c30052) bottom / 40px 2px no-repeat; }
.running.current { background: linear-gradient(#c30052, #c30052) bottom / 48px 2px no-repeat #efefef; }
.badge-f { font: 11px "Open Sans", sans-serif; fill: #fff; }
.tray { display: flex; margin-left: auto; color: #111; }
.tray button { width: 24px; }
.tray .news { width: auto; gap: 7px; margin-right: 22px; white-space: nowrap; }
.up { color: #16851a; }
.tray .lang { width: 32px; font-size: 11px; }
.tray .clock { width: 72px; font-size: 11px; line-height: 18px; }
.tray .notice { position: relative; width: 36px; }
.notice span { position: absolute; left: 17px; top: 18px; width: 18px; height: 18px; border: 1px solid #777; border-radius: 50%; background: #d5d5d5; font-size: 10px; line-height: 16px; }
.tray .copilot { width: 38px; }
.pre { font: bold 7px "Liberation Sans", sans-serif; }
.show-desktop { width: 5px; margin-left: 7px; border-left: 1px solid #a8a8a8; }
```
